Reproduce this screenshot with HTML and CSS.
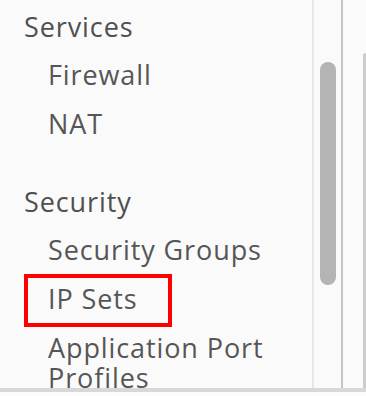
FILE: index.html
```html
<!DOCTYPE html>
<html lang="en">
<head>
    <meta charset="UTF-8">
    <meta name="viewport" content="width=device-width, initial-scale=1.0">
    <title>Networking</title>
    <link rel="stylesheet" href="styles.css">
</head>
<body>
    <div class="layout">
        <nav class="sidenav">
            <div class="nav-section">
                <div class="nav-header">Services</div>
                <a class="nav-link">Firewall</a>
                <a class="nav-link">NAT</a>
            </div>
            <div class="nav-section">
                <div class="nav-header">Security</div>
                <a class="nav-link">Security Groups</a>
                <a class="nav-link marked">IP Sets</a>
                <a class="nav-link">Application Port Profiles</a>
            </div>
        </nav>
        <div class="scrollbar">
            <div class="thumb"></div>
        </div>
        <div class="divider"></div>
        <div class="content">
            <div class="panel"></div>
        </div>
    </div>
    <div class="footer-strip"></div>
</body>
</html>
```

FILE: styles.css
```css
body {
    margin: 0;
    font-family: 'Open Sans', 'Noto Sans', sans-serif;
    background-color: #fcfcfc;
    color: #565656;
}
.layout {
    display: flex;
    height: 388px;
    background-color: #fafafa;
    border-bottom: 4px solid #d8d8d8;
    overflow: hidden;
}
.sidenav {
    width: 288px;
    padding: 12px 0 0 24px;
    border-right: 2px solid #e6e6e6;
    overflow: hidden;
}
.nav-section + .nav-section {
    margin-top: 39px;
}
.nav-header {
    font-size: 27px;
    line-height: 30px;
    font-weight: 500;
    letter-spacing: 0.9px;
    color: #505050;
    margin-bottom: 8px;
}
.nav-link {
    display: block;
    position: relative;
    font-size: 27px;
    line-height: 30px;
    letter-spacing: 0.9px;
    padding: 10px 30px 9px 24px;
}
/* annotation frame drawn over the item */
.nav-link.marked::after {
    content: '';
    position: absolute;
    top: 0;
    left: 0;
    width: 148px;
    height: 53px;
    border: 4px solid #ff0000;
    box-sizing: border-box;
}
.scrollbar {
    width: 27px;
    padding-top: 62px;
}
.thumb {
    width: 16px;
    height: 223px;
    margin-left: 6px;
    border-radius: 8px;
    background-color: #b4b4b4;
}
.divider {
    width: 2px;
    background-color: #c4c4c4;
}
.content {
    flex: 1;
    padding: 53px 0 0 20px;
}
.panel {
    height: 100%;
    border-left: 3px solid #cccccc;
    border-top-left-radius: 4px;
}
.footer-strip {
    height: 4px;
}
```
